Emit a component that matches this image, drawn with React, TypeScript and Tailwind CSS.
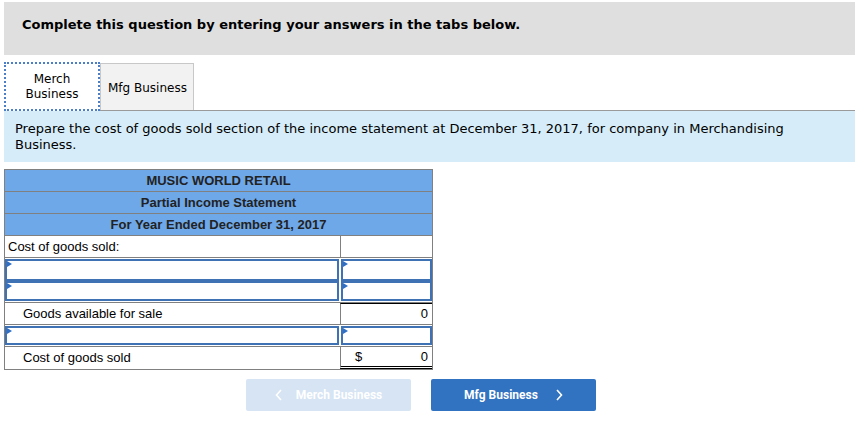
import React from "react";

const verdana = { fontFamily: '"DejaVu Sans", Verdana, sans-serif' };
const arial = { fontFamily: '"Liberation Sans", Arial, sans-serif' };

function Marker() {
  return (
    <svg className="absolute left-0 top-0" width="5" height="7" viewBox="0 0 5 7">
      <path d="M0 0 L5 3 L0 6 Z" fill="#2f6fc4" />
    </svg>
  );
}

function InputCell({ w }: { w: string }) {
  return (
    <div className={`relative h-full ${w} border-2 border-[#3f72b5] bg-white`}>
      <Marker />
    </div>
  );
}

export default function App() {
  return (
    <div className="w-[863px] h-[421px] bg-white px-[4px] pt-[2px] text-black" style={verdana}>
      <div className="h-[53px] w-[851px] bg-[#dfdfdf] pl-[18px] pt-[15px] text-[13px] leading-[16px] font-bold">
        Complete this question by entering your answers in the tabs below.
      </div>

      <div className="mt-[7px] flex h-[49px] w-[851px] items-end border-b border-[#9a9a9a]">
        <div className="relative z-10 -mb-px flex h-[49px] w-[96px] items-center justify-center border-[2px] border-dotted border-[#4a7fc8] bg-white text-center text-[12px] leading-[15px]">
          Merch
          <br />
          Business
        </div>
        <div className="flex h-[47px] w-[94px] items-center border border-b-0 border-[#c8c8c8] bg-[#f2f2f2] pl-[7px] pt-[2px] text-[12px]">
          Mfg Business
        </div>
      </div>

      <div className="w-[851px] bg-[#d6edf9] pl-[11px] pr-[20px] pt-[10px] pb-[9px] text-[13px] leading-[16px]">
        Prepare the cost of goods sold section of the income statement at December 31, 2017, for company in Merchandising Business.
      </div>

      <div className="mt-[7px] w-[429px] border border-[#808080] text-[13px] text-[#222]" style={arial}>
        {["MUSIC WORLD RETAIL", "Partial Income Statement", "For Year Ended December 31, 2017"].map((t) => (
          <div key={t} className="flex h-[22px] items-center justify-center border-b border-[#808080] bg-[#6fa8e8] font-bold">
            {t}
          </div>
        ))}
        <div className="flex h-[22px] border-b border-[#808080]">
          <div className="flex w-[335px] items-center pl-[3px] text-black">Cost of goods sold:</div>
          <div className="flex-1 border-l border-[#808080]" />
        </div>
        <div className="flex h-[23px] gap-[2px] pt-[1px]">
          <InputCell w="w-[334px]" />
          <InputCell w="flex-1" />
        </div>
        <div className="flex h-[22px] gap-[2px] border-b border-[#808080] pb-[1px]">
          <InputCell w="w-[334px]" />
          <InputCell w="flex-1" />
        </div>
        <div className="flex h-[22px] border-b border-[#808080]">
          <div className="flex w-[335px] items-center pl-[18px] text-black">Goods available for sale</div>
          <div className="flex flex-1 items-center justify-end border-l border-[#808080] border-t border-t-black pr-[4px] text-black">0</div>
        </div>
        <div className="flex h-[22px] gap-[2px] border-b border-[#808080] py-[1px]">
          <InputCell w="w-[334px]" />
          <InputCell w="flex-1" />
        </div>
        <div className="flex h-[22px]">
          <div className="flex w-[335px] items-center pl-[18px] text-black">Cost of goods sold</div>
          <div className="flex flex-1 items-center justify-between border-l border-[#808080] border-b-[3px] border-b-black [border-bottom-style:double] pl-[14px] pr-[4px] text-black">
            <span>$</span>
            <span>0</span>
          </div>
        </div>
      </div>

      <div className="ml-[242px] mt-[9px] flex gap-[20px]" style={{ fontFamily: 'Roboto, "Liberation Sans", sans-serif' }}>
        <button className="flex h-[32px] w-[165px] items-center justify-center gap-[13px] rounded-[2px] bg-[#d6e4f4] text-[12px] font-bold text-white">
          <svg width="8" height="12" viewBox="0 0 8 12"><path d="M6 1 L1.5 6 L6 11" stroke="white" strokeWidth="1.6" fill="none" /></svg>
          Merch Business
        </button>
        <button className="flex h-[32px] w-[165px] items-center justify-center gap-[17px] rounded-[2px] bg-[#3172c1] text-[12px] font-bold text-white">
          Mfg Business
          <svg width="8" height="12" viewBox="0 0 8 12"><path d="M2 1 L6.5 6 L2 11" stroke="white" strokeWidth="1.6" fill="none" /></svg>
        </button>
      </div>
    </div>
  );
}
